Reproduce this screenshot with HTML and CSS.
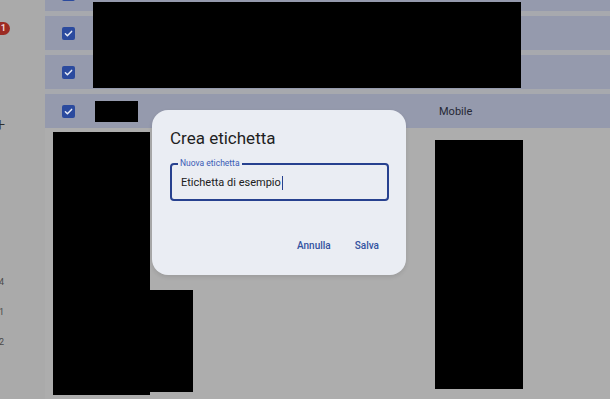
FILE: index.html
```html
<!DOCTYPE html>
<html lang="it">
<head>
  <meta charset="UTF-8">
  <meta name="viewport" content="width=device-width, initial-scale=1.0">
  <title>Crea etichetta</title>
  <link rel="stylesheet" href="styles.css">
</head>
<body>
  <div class="app">
    <aside class="sidebar">
      <span class="badge">11</span>
      <span class="plus">+</span>
      <ul class="counts">
        <li>4</li>
        <li>1</li>
        <li>2</li>
      </ul>
    </aside>

    <main class="main">
      <div class="rows">
        <div class="row">
          <div class="check-cell"><span class="checkbox"></span></div>
          <div class="cell"></div>
        </div>
        <div class="row">
          <div class="check-cell"><span class="checkbox"><svg viewBox="0 0 12 12"><path d="M2.6 6.3l2.2 2.1 4.6-4.7"/></svg></span></div>
          <div class="cell"></div>
        </div>
        <div class="row">
          <div class="check-cell"><span class="checkbox"><svg viewBox="0 0 12 12"><path d="M2.6 6.3l2.2 2.1 4.6-4.7"/></svg></span></div>
          <div class="cell"></div>
        </div>
        <div class="row">
          <div class="check-cell"><span class="checkbox"><svg viewBox="0 0 12 12"><path d="M2.6 6.3l2.2 2.1 4.6-4.7"/></svg></span></div>
          <div class="cell"><span class="redact redact-sender"></span></div>
          <div class="cell label">Mobile</div>
        </div>
      </div>

      <!-- parti oscurate -->
      <div class="redact redact-top"></div>
      <div class="redact redact-left"></div>
      <div class="redact redact-left-foot"></div>
      <div class="redact redact-right"></div>
    </main>

    <div class="dialog">
      <h2 class="dialog-title">Crea etichetta</h2>
      <div class="field">
        <span class="field-label">Nuova etichetta</span>
        <span class="field-value">Etichetta di esempio<span class="caret"></span></span>
      </div>
      <div class="actions">
        <button type="button" class="btn-text">Annulla</button>
        <button type="button" class="btn-text">Salva</button>
      </div>
    </div>
  </div>
</body>
</html>
```

FILE: styles.css
```css
:root {
  --bg-color: #adadad;
  --row-color: #959aad;
  --gap-color: #a7a9ae;
  --dialog-color: #eaedf3;
  --primary-color: #2b4a9e;
  --accent-color: #3a5bb5;
  --text-color: #1f1f1f;
}

* {
  box-sizing: border-box;
  margin: 0;
  padding: 0;
}

body {
  font-family: Roboto, 'Liberation Sans', Arial, sans-serif;
  background-color: var(--bg-color);
  color: var(--text-color);
  width: 610px;
  height: 399px;
  overflow: hidden;
}

.app {
  position: relative;
  display: flex;
  height: 399px;
}

/* barra laterale (tagliata a sinistra) */
.sidebar {
  width: 45px;
  flex-shrink: 0;
  display: flex;
  flex-direction: column;
  align-items: flex-start;
  background-color: #aaaaaa;
  overflow: hidden;
}

.badge {
  margin-top: 22px;
  margin-left: -9px;
  width: 19px;
  height: 13px;
  border-radius: 7px;
  background-color: #9c2b23;
  color: #f3d6d3;
  font-size: 9px;
  font-weight: 700;
  line-height: 13px;
  text-align: right;
  padding-right: 4px;
}

.plus {
  margin-top: 80px;
  margin-left: -5px;
  font-size: 18px;
  line-height: 20px;
  font-weight: 300;
  color: #2e2e2e;
}

.counts {
  list-style: none;
  margin-top: 132px;
  margin-left: -1px;
}

.counts li {
  height: 30px;
  line-height: 30px;
  font-size: 9px;
  color: #4a4a4a;
}

/* elenco messaggi */
.main {
  flex: 1;
  background-color: var(--bg-color);
}

.rows {
  display: flex;
  flex-direction: column;
  gap: 5px;
  margin-top: -23px;
  background-color: var(--gap-color);
}

.row {
  display: grid;
  grid-template-columns: 47px 347px auto;
  align-items: center;
  height: 34px;
  background-color: var(--row-color);
}

.check-cell {
  display: flex;
  justify-content: center;
}

.checkbox {
  width: 13px;
  height: 13px;
  border-radius: 2px;
  background-color: var(--primary-color);
  display: flex;
  align-items: center;
  justify-content: center;
}

.checkbox svg {
  width: 11px;
  height: 11px;
  fill: none;
  stroke: #e9edf7;
  stroke-width: 1.6;
  stroke-linecap: round;
  stroke-linejoin: round;
}

.cell {
  display: flex;
  align-items: center;
}

.label {
  font-size: 11px;
  color: #262835;
}

.redact {
  background-color: #000;
}

.redact-sender {
  display: block;
  width: 43px;
  height: 21px;
  margin-left: 3px;
}

.redact-top {
  position: absolute;
  left: 93px;
  top: 2px;
  width: 428px;
  height: 86px;
}

.redact-left {
  position: absolute;
  left: 53px;
  top: 132px;
  width: 97px;
  height: 263px;
}

.redact-left-foot {
  position: absolute;
  left: 150px;
  top: 290px;
  width: 43px;
  height: 102px;
}

.redact-right {
  position: absolute;
  left: 435px;
  top: 140px;
  width: 88px;
  height: 249px;
}

/* finestra di dialogo */
.dialog {
  position: absolute;
  left: 152px;
  top: 110px;
  width: 254px;
  height: 165px;
  padding: 17px 17px 0 18px;
  background-color: var(--dialog-color);
  border-radius: 16px;
  box-shadow: 0 2px 4px rgba(0, 0, 0, 0.1);
}

.dialog-title {
  font-size: 17px;
  font-weight: 400;
  line-height: 22px;
  color: var(--text-color);
  margin-bottom: 14px;
}

.field {
  position: relative;
  height: 38px;
  border: 2px solid #27418f;
  border-radius: 4px;
  display: flex;
  align-items: center;
  padding-left: 9px;
}

.field-label {
  position: absolute;
  top: -7px;
  left: 6px;
  padding: 0 2px;
  background-color: var(--dialog-color);
  font-size: 8.5px;
  line-height: 11px;
  color: var(--accent-color);
}

.field-value {
  font-size: 11px;
  color: #202020;
  display: flex;
  align-items: center;
  margin-top: 1px;
}

.caret {
  display: inline-block;
  width: 1px;
  height: 14px;
  margin-left: 1px;
  background-color: #27418f;
}

.actions {
  display: flex;
  justify-content: flex-end;
  gap: 4px;
  margin-top: 32px;
}

.btn-text {
  padding: 0 10px;
  height: 24px;
  border: none;
  background: none;
  font-family: inherit;
  font-size: 10px;
  font-weight: 500;
  color: #33529f;
  cursor: pointer;
}
```
